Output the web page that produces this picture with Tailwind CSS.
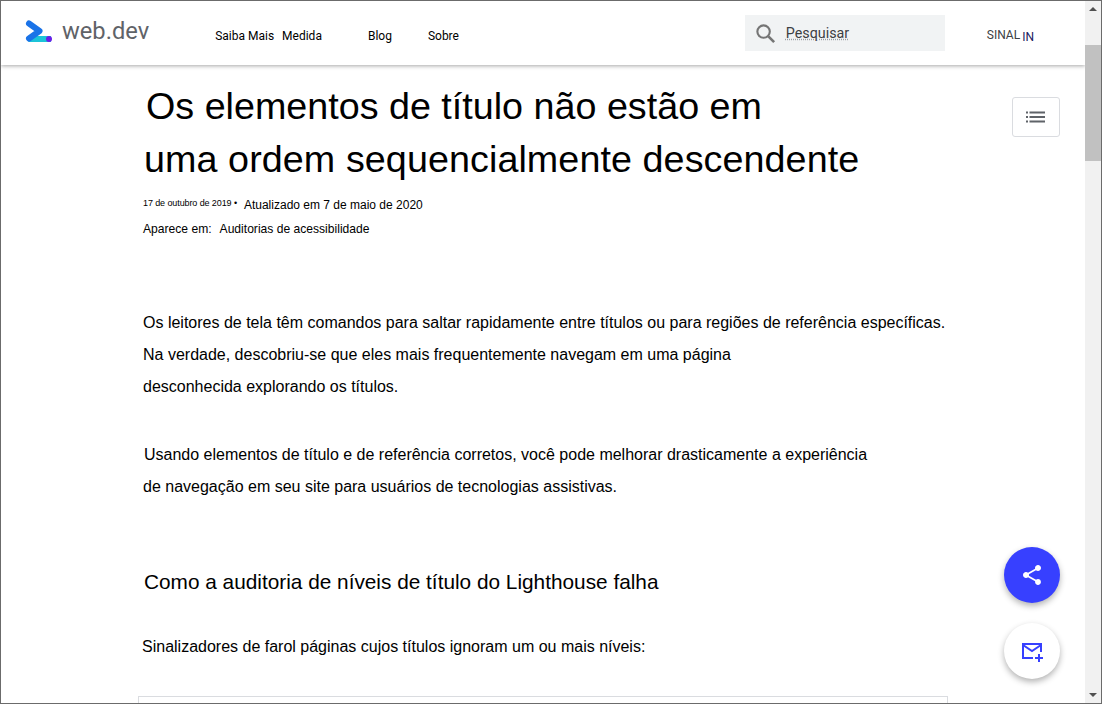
<!DOCTYPE html>
<html lang="pt">
<head>
    <meta charset="UTF-8">
    <title>web.dev</title>
    <script src="https://cdn.jsdelivr.net/npm/@tailwindcss/browser@4"></script>
</head>
<body class="bg-white overflow-hidden">
<div class="relative flex w-[1102px] h-[704px] border border-[#6b6b6b] overflow-hidden font-['Liberation_Sans',Arial,sans-serif] text-black">

    <div class="relative flex-1 min-w-0 h-full">
        <!-- Header -->
        <header class="relative z-10 flex items-start h-[64px] bg-white shadow-[0_1px_4px_rgba(0,0,0,0.35)]">
            <svg class="ml-[24px] mt-[19px] w-[28px] h-[24px]" viewBox="0 0 28 24">
                <path d="M8 16 H26 V22 H3 Z" fill="#1cc4d8"/>
                <path d="M4 3.500 L14.500 11 L4 18.500" fill="none" stroke="#1a73e8" stroke-width="6" stroke-linejoin="round" stroke-linecap="round"/>
                <circle cx="24" cy="19" r="3" fill="#6a1ee8"/>
            </svg>
            <span class="ml-[9px] mt-[15px] text-[23.700px] leading-[30px] text-[#5f6368] font-['Roboto',sans-serif]">web.dev</span>
            <nav class="flex text-[12px] leading-[16px] mt-[27px] font-['Roboto',sans-serif]">
                <a class="ml-[66px]">Saiba Mais</a>
                <a class="ml-[8px]">Medida</a>
                <a class="ml-[46px]">Blog</a>
                <a class="ml-[36px]">Sobre</a>
            </nav>
            <div class="ml-auto mt-[14px] flex items-center w-[200px] h-[36px] bg-[#f1f3f4]">
                <svg class="ml-[9px] w-[23px] h-[23px]" viewBox="0 0 24 24" fill="none" stroke="#757575" stroke-width="2.200">
                    <circle cx="10" cy="10" r="6.500"/>
                    <path d="M15 15 L21 21" stroke-width="2.800"/>
                </svg>
                <span class="ml-[9px] -mt-[1px] text-[14.300px] leading-[16px] text-[#3c4043] font-['Roboto',sans-serif] underline decoration-dotted decoration-[#9aa0a6]">Pesquisar</span>
            </div>
            <div class="ml-[42px] mr-[51px] mt-[27px] flex text-[12px] leading-[14px] text-[#3c4043] font-['Roboto',sans-serif]">
                <span>SINAL</span>
                <span class="ml-[2px] mt-[2px] text-[#202060]">IN</span>
            </div>
        </header>

        <!-- Article -->
        <main class="relative">
            <button class="absolute right-[25px] top-[17px] flex items-center justify-center w-[48px] h-[40px] bg-white border border-[#dadce0] rounded-[3px]">
                <svg class="w-[20px] h-[12px]" viewBox="0 0 20 12" fill="#5f6368">
                    <rect x="0" y="0.500" width="2" height="2"/><rect x="3.500" y="0.500" width="15.500" height="2"/>
                    <rect x="0" y="5" width="2" height="2"/><rect x="3.500" y="5" width="15.500" height="2"/>
                    <rect x="0" y="9.500" width="2" height="2"/><rect x="3.500" y="9.500" width="15.500" height="2"/>
                </svg>
            </button>

            <h1 class="text-[37.700px] leading-[53px] font-normal mt-[15px]">
                <span class="block ml-[145px]">Os elementos de título não estão em</span>
                <span class="block ml-[143px] tracking-[0.080px]">uma ordem sequencialmente descendente</span>
            </h1>

            <div class="mt-[11px] ml-[142px] flex items-center h-[16px]">
                <span class="text-[9px] tracking-[-0.1px] -mt-[3px]">17 de outubro de 2019 •</span>
                <span class="ml-[7px] text-[12px]">Atualizado em 7 de maio de 2020</span>
            </div>
            <div class="mt-[8px] ml-[142px] flex items-center h-[16px] text-[12.100px]">
                <span>Aparece em:</span>
                <span class="ml-[8px]">Auditorias de acessibilidade</span>
            </div>

            <div class="mt-[70px] text-[16px] leading-[32px]">
                <p class="ml-[142px]">Os leitores de tela têm comandos para saltar rapidamente entre títulos ou para regiões de referência específicas.</p>
                <p class="ml-[142px]">Na verdade, descobriu-se que eles mais frequentemente navegam em uma página</p>
                <p class="ml-[142px]">desconhecida explorando os títulos.</p>
            </div>
            <div class="mt-[36px] text-[16px] leading-[32px]">
                <p class="ml-[143px]">Usando elementos de título e de referência corretos, você pode melhorar drasticamente a experiência</p>
                <p class="ml-[142px]">de navegação em seu site para usuários de tecnologias assistivas.</p>
            </div>
            <h2 class="mt-[63px] ml-[143px] text-[20.800px] leading-[32px] font-normal">Como a auditoria de níveis de título do Lighthouse falha</h2>
            <p class="mt-[33px] ml-[141px] text-[16px] leading-[32px]">Sinalizadores de farol páginas cujos títulos ignoram um ou mais níveis:</p>
            <div class="mt-[33px] ml-[137px] w-[810px] h-[40px] border border-[#dadce0]"></div>
        </main>
    </div>

    <!-- Scrollbar -->
    <div class="relative z-20 flex flex-col justify-between items-center w-[16px] h-full bg-[#f1f1f1]">
        <div class="w-0 h-0 mt-[6px] border-x-[4px] border-x-transparent border-b-[4px] border-b-[#505050]"></div>
        <div class="absolute top-[44px] left-0 w-full h-[116px] bg-[#c1c1c1]"></div>
        <div class="w-0 h-0 mb-[6px] border-x-[4px] border-x-transparent border-t-[4px] border-t-[#505050]"></div>
    </div>

    <!-- Floating buttons -->
    <button class="absolute z-20 left-[1003px] top-[546px] flex items-center justify-center w-[56px] h-[56px] rounded-full bg-[#3740ff] shadow-[0_3px_6px_rgba(0,0,0,0.3)]">
        <svg class="w-[24px] h-[24px]" viewBox="0 0 24 24" fill="white">
            <path d="M18 16.080c-.76 0-1.440.3-1.960.77L8.910 12.700c.05-.23.09-.46.09-.7s-.04-.47-.09-.7l7.050-4.110c.54.5 1.250.81 2.040.81 1.660 0 3-1.340 3-3s-1.340-3-3-3-3 1.340-3 3c0 .24.04.47.09.7L8.040 9.810C7.500 9.310 6.790 9 6 9c-1.660 0-3 1.340-3 3s1.340 3 3 3c.79 0 1.500-.31 2.040-.81l7.120 4.160c-.05.21-.08.43-.08.65 0 1.610 1.310 2.920 2.920 2.920s2.920-1.310 2.920-2.920-1.310-2.920-2.920-2.920z"/>
        </svg>
    </button>
    <button class="absolute z-20 left-[1003px] top-[622px] flex items-center justify-center w-[56px] h-[56px] rounded-full bg-white shadow-[0_3px_6px_rgba(0,0,0,0.3)]">
        <svg class="w-[24px] h-[24px]" viewBox="0 0 24 24" fill="none" stroke="#3740ff" stroke-width="2">
            <path d="M13 19 H3 V5 H21 V13"/>
            <path d="M3 6 L12 12 L21 6"/>
            <path d="M19 15 V23 M15 19 H23"/>
        </svg>
    </button>
</div>
</body>
</html>
